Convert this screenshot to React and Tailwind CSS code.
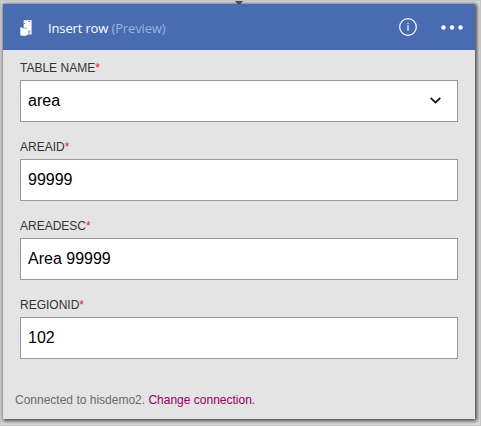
const fields = [
  { label: "TABLE NAME", value: "area", select: true },
  { label: "AREAID", value: "99999" },
  { label: "AREADESC", value: "Area 99999" },
  { label: "REGIONID", value: "102" },
];

function RowIcon() {
  return (
    <svg className="mt-px h-4 w-3 shrink-0" viewBox="0 0 12 16" fill="#fff">
      <path d="M3.7 0.2h7.9v14.3H6V8H3.7z" />
      <path d="M0.3 7.6q1-.8 2 .4h5V15.2q-3.5 1.2-7 0z" />
      <path d="M4 3.5h1.2M8.4 1.5h1.6M8 11.2h2.3M8 13h2.3" stroke="#486bb2" strokeWidth="0.8" />
      <path d="M2.6 7.7q2.5 1.4 4.8 0" fill="none" stroke="#6f8cc6" strokeWidth="0.7" />
    </svg>
  );
}

function Field({ label, value, select }) {
  return (
    <div className="h-[79px]">
      <div className="h-[21px] pt-[2px] text-[12px] leading-[14px] text-[#333]">
        {label}<span className="text-[#e8202c]">*</span>
      </div>
      <div className="flex h-[42px] items-center justify-between border border-[#999] bg-white pr-4 pl-[7px] text-[16px] text-black">
        <span>{value}</span>
        {select && (
          <svg className="mb-[2px] h-[7px] w-[11px]" viewBox="0 0 11 7" fill="none" stroke="#111" strokeWidth="1.7">
            <path d="M.7 .8 5.5 5.6 10.3 .8" />
          </svg>
        )}
      </div>
    </div>
  );
}

export default function App() {
  return (
    <div className="relative h-[426px] w-[481px] overflow-hidden border border-[#c4c4c4] bg-[#dedede] pt-[3px] pl-[2px] font-['Liberation_Sans',sans-serif]">
      <svg className="absolute top-0 left-[233px] h-[3px] w-[10px]" viewBox="0 0 10 3">
        <path d="M1 0h8L6.5 3h-3z" fill="#444b58" />
      </svg>
      <div className="flex h-[415px] w-[472px] flex-col bg-[#e4e4e4] shadow-[1px_1px_4px_1px_rgba(0,0,0,0.7)]">
        <header className="flex h-[46px] shrink-0 items-center bg-[#486bb2] pr-3 pl-[17px] text-white">
          <RowIcon />
          <h1 className="ml-4 flex-1 pt-[2px] font-['Open_Sans',sans-serif] text-[13px] leading-[18px] tracking-[-0.14px] whitespace-pre">
            Insert row <span className="text-[#9db2de]">(Preview)</span>
          </h1>
          <svg className="h-[18px] w-[18px]" viewBox="0 0 18 18" fill="none" stroke="#fff" strokeWidth="1.2">
            <circle cx="9" cy="9" r="8.3" />
            <path d="M9 7.3v5.5M9 4.8v1.4" />
          </svg>
          <svg className="ml-6 h-[5px] w-[22px]" viewBox="0 0 22 5" fill="#fff">
            <circle cx="2.5" cy="2.5" r="2.2" />
            <circle cx="11" cy="2.5" r="2.2" />
            <circle cx="19.5" cy="2.5" r="2.2" />
          </svg>
        </header>
        <main className="flex-1 px-[17px] pt-[9px]">
          {fields.map((f) => <Field key={f.label} {...f} />)}
        </main>
        <footer className="h-[26px] shrink-0 pl-3 text-[12px] leading-[14px] text-[#6b6b6b]">
          Connected to hisdemo2. <span className="text-[#96005f]">Change connection.</span>
        </footer>
      </div>
    </div>
  );
}
